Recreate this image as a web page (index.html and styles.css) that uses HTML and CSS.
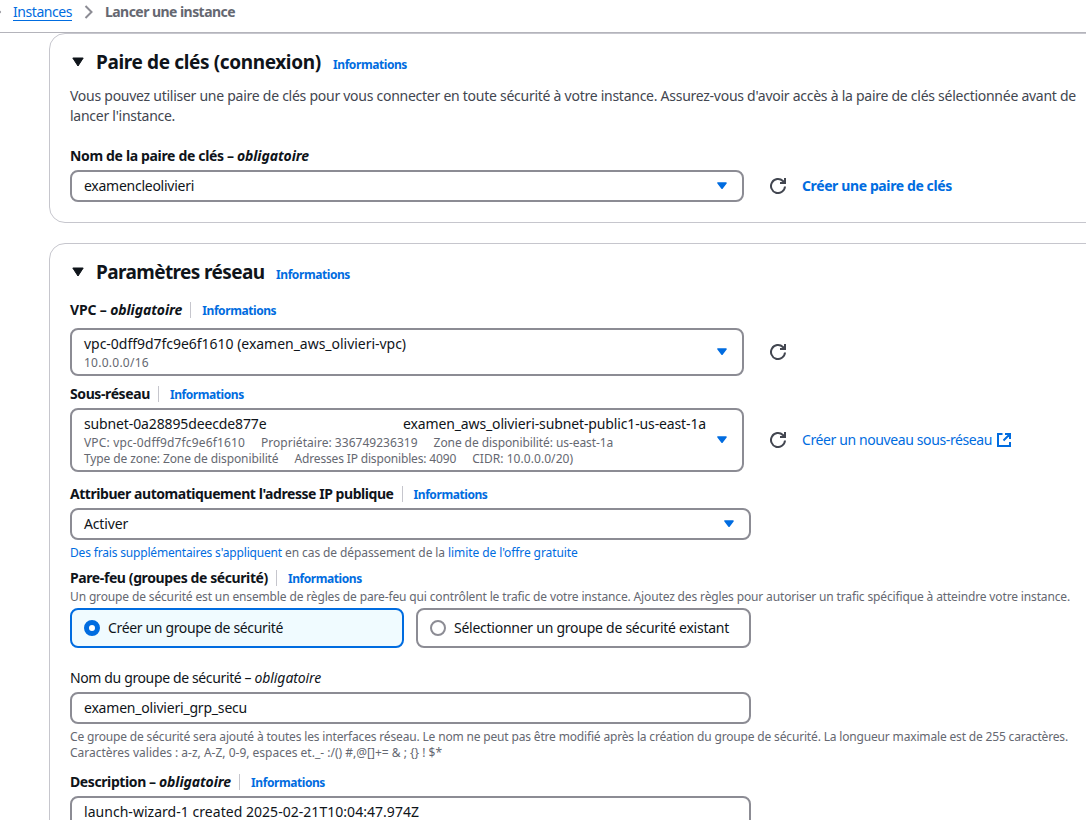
FILE: index.html
```html
<!DOCTYPE html>
<html lang="fr">
<head>
<meta charset="utf-8">
<title>Lancer une instance</title>
<link rel="stylesheet" href="styles.css">
</head>
<body>
<svg class="defs" width="0" height="0" aria-hidden="true">
  <symbol id="caret" viewBox="0 0 16 16"><path d="M4 5h8l-4 5.2z" fill="currentColor" stroke="currentColor" stroke-width="1.6" stroke-linejoin="round"/></symbol>
  <symbol id="refresh" viewBox="0 0 16 16"><path d="M15 8.5A7 7 0 1 1 12.9 3L15 5" fill="none" stroke="currentColor" stroke-width="2"/><path d="M10 5h5V0" fill="none" stroke="currentColor" stroke-width="2"/><path d="M12 4.5L14.500 2V5z" fill="currentColor"/></symbol>
  <symbol id="external" viewBox="0 0 16 16"><path d="M6.500 2H2v12h12V10M9 2h5v5M14 2L7.500 8.500" fill="none" stroke="currentColor" stroke-width="2"/></symbol>
</svg>

<nav class="breadcrumb">
  <svg class="crumb-edge" width="3" height="14" viewBox="0 0 3 14"><path d="M0 5.500L1.200 7L0 8.500" fill="#8c8c94"/></svg>
  <a class="crumb-link" href="#">Instances</a>
  <svg class="chevron" width="10" height="14" viewBox="0 0 10 14"><path d="M1.500 1l6 6-6 6" fill="none" stroke="#8c8c94" stroke-width="2"/></svg>
  <span class="crumb-current">Lancer une instance</span>
</nav>

<main class="content">
  <section class="card">
    <header class="card-head">
      <svg class="toggle" viewBox="0 0 16 16"><path d="M2.800 4h10.400L8 12z" fill="currentColor" stroke="currentColor" stroke-linejoin="round"/></svg>
      <h2 class="title-key">Paire de clés (connexion)</h2>
      <a class="info" href="#">Informations</a>
    </header>
    <p class="intro">Vous pouvez utiliser une paire de clés pour vous connecter en toute sécurité à votre instance. Assurez-vous d'avoir accès à la paire de clés sélectionnée avant de<br>lancer l'instance.</p>
    <div class="label label-key"><b>Nom de la paire de clés – <i>obligatoire</i></b></div>
    <div class="field-row">
      <div class="select with-action"><span class="value v-key">examencleolivieri</span><svg class="caret"><use href="#caret"/></svg></div>
      <svg class="refresh"><use href="#refresh"/></svg>
      <a class="action strong" href="#">Créer une paire de clés</a>
    </div>
  </section>

  <section class="card">
    <header class="card-head">
      <svg class="toggle" viewBox="0 0 16 16"><path d="M2.800 4h10.400L8 12z" fill="currentColor" stroke="currentColor" stroke-linejoin="round"/></svg>
      <h2 class="title-net">Paramètres réseau</h2>
      <a class="info" href="#">Informations</a>
    </header>

    <div class="label label-vpc"><b class="l-vpc">VPC – <i>obligatoire</i></b><a class="info split" href="#"><span>Informations</span></a></div>
    <div class="field-row">
      <div class="select with-action two-line">
        <div class="stack"><span class="value v-vpc">vpc-0dff9d7fc9e6f1610 (examen_aws_olivieri-vpc)</span><span class="tag g-cidr">10.0.0.0/16</span></div>
        <svg class="caret"><use href="#caret"/></svg>
      </div>
      <svg class="refresh"><use href="#refresh"/></svg>
    </div>

    <div class="label label-subnet"><b>Sous-réseau</b><a class="info split" href="#"><span>Informations</span></a></div>
    <div class="field-row">
      <div class="select with-action three-line">
        <div class="stack">
          <div class="value-pair"><span class="value v-subnet">subnet-0a28895deecde877e</span><span class="value v-subnet">examen_aws_olivieri-subnet-public1-us-east-1a</span></div>
          <div class="tags"><span class="tag g-vpc">VPC: vpc-0dff9d7fc9e6f1610</span><span class="tag g-owner">Propriétaire: 336749236319</span><span class="tag g-zone">Zone de disponibilité: us-east-1a</span></div>
          <div class="tags"><span class="tag g-type">Type de zone: Zone de disponibilité</span><span class="tag g-ips">Adresses IP disponibles: 4090</span><span class="tag g-range">CIDR: 10.0.0.0/20)</span></div>
        </div>
        <svg class="caret"><use href="#caret"/></svg>
      </div>
      <svg class="refresh"><use href="#refresh"/></svg>
      <a class="action" href="#">Créer un nouveau sous-réseau</a>
      <svg class="external"><use href="#external"/></svg>
    </div>

    <div class="label label-ip"><b>Attribuer automatiquement l'adresse IP publique</b><a class="info split" href="#"><span>Informations</span></a></div>
    <div class="select"><span class="value v-on">Activer</span><svg class="caret"><use href="#caret"/></svg></div>
    <p class="hint hint-cost"><a class="cost-link" href="#">Des frais supplémentaires s'appliquent</a> en cas de dépassement de la <a class="limit-link" href="#">limite de l'offre gratuite</a></p>

    <div class="label label-firewall"><b>Pare-feu (groupes de sécurité)</b><a class="info split" href="#"><span>Informations</span></a></div>
    <p class="hint hint-firewall">Un groupe de sécurité est un ensemble de règles de pare-feu qui contrôlent le trafic de votre instance. Ajoutez des règles pour autoriser un trafic spécifique à atteindre votre instance.</p>
    <div class="tiles">
      <div class="tile selected"><span class="radio"></span><span class="v-create">Créer un groupe de sécurité</span></div>
      <div class="tile"><span class="radio"></span><span class="v-pick">Sélectionner un groupe de sécurité existant</span></div>
    </div>

    <div class="label label-group"><span>Nom du groupe de sécurité – <i>obligatoire</i></span></div>
    <div class="select"><span class="value v-group">examen_olivieri_grp_secu</span></div>
    <p class="hint hint-group">Ce groupe de sécurité sera ajouté à toutes les interfaces réseau. Le nom ne peut pas être modifié après la création du groupe de sécurité. La longueur maximale est de 255 caractères.<br><span class="charset">Caractères valides : a-z, A-Z, 0-9, espaces et._- :/() #,@[]+= &amp; ; {} ! $*</span></p>

    <div class="label label-desc"><b>Description – <i>obligatoire</i></b><a class="info split" href="#"><span>Informations</span></a></div>
    <div class="select"><span class="value v-desc">launch-wizard-1 created 2025-02-21T10:04:47.974Z</span></div>
  </section>
</main>
</body>
</html>
```
FILE: styles.css
```css
* { box-sizing: border-box; }
html { overflow: hidden; }
body {
  margin: 0;
  height: 820px;
  overflow: hidden;
  background: #fff;
  color: #0f141a;
  font: 14px/20px "Noto Sans", sans-serif;
}
h2, p { margin: 0; }
a { color: #006ce0; text-decoration: none; }
svg { display: block; flex: none; }
.defs { position: absolute; }

.breadcrumb {
  display: flex;
  align-items: center;
  height: 33px;
  padding-bottom: 8px;
  border-bottom: 1px solid #b4b4bb;
  white-space: nowrap;
}
.crumb-edge { margin-right: 10px; }
.crumb-link {
  width: 59px;
  letter-spacing: -0.44px;
  line-height: 17px;
  border-bottom: 1px solid #006ce0;
}
.chevron { margin: 0 11px 0 12px; }
.crumb-current { color: #656871; font-weight: 700; letter-spacing: -0.55px; }

.content { display: flex; flex-direction: column; gap: 20px; padding-left: 49px; width: 1140px; }
.card {
  border: 1px solid #c6c6cd;
  border-radius: 16px;
  padding: 16px 20px 20px;
  white-space: nowrap;
}
.card-head { display: flex; align-items: center; height: 24px; }
.toggle { width: 16px; height: 16px; margin-right: 10px; }
h2 { font-size: 19px; line-height: 24px; font-weight: 700; margin-right: 11px; }
.title-key { width: 226px; letter-spacing: -0.37px; }
.title-net { width: 169px; letter-spacing: -0.61px; }
.info { font-size: 12px; line-height: 20px; font-weight: 700; letter-spacing: -0.42px; }
.card-head .info { padding-top: 6px; }

.intro { margin-top: 12px; color: #424650; letter-spacing: -0.262px; }

.label { display: flex; align-items: center; height: 20px; margin-bottom: 4px; letter-spacing: -0.4px; }
.label i { letter-spacing: -0.09px; }
.label .split { display: flex; align-items: center; height: 16px; margin-left: 8px; padding-left: 11px; border-left: 1px solid #c6c6cd; }
.split span { padding-top: 2px; }
.label-key { margin-top: 20px; letter-spacing: -0.34px; }
.label-vpc { margin-top: 16px; margin-bottom: 8px; }
.l-vpc { letter-spacing: -0.15px; }
.label-subnet { margin-top: 8px; }
.label-ip { margin-top: 12px; letter-spacing: -0.445px; }
.label-firewall { margin-top: 7px; margin-bottom: 1px; }
.label-group { margin-top: 20px; letter-spacing: -0.37px; }
.label-desc { margin-top: 11px; }

.field-row { display: flex; align-items: center; }
.select {
  display: flex;
  align-items: center;
  justify-content: space-between;
  width: 681px;
  height: 32px;
  padding: 0 12px;
  border: 2px solid #8c8c94;
  border-radius: 8px;
}
.with-action { width: 674px; }
.two-line { height: 48px; }
.three-line { height: 64px; }
.stack { display: flex; flex-direction: column; }
.value-pair { display: flex; justify-content: space-between; width: 622px; }
.tags { display: flex; gap: 16px; height: 16px; }
.tag { height: 16px; font-size: 12px; line-height: 18px; color: #656871; }
.caret { width: 16px; height: 16px; color: #006ce0; }
.refresh { width: 16px; height: 16px; margin: 0 16px 0 26px; color: #424650; }
.action { letter-spacing: -0.39px; }
.strong { font-weight: 700; }
.external { width: 16px; height: 16px; margin-left: 4px; color: #006ce0; }

.hint { font-size: 12px; line-height: 16px; color: #656871; }
.hint-cost { margin-top: 5px; letter-spacing: -0.09px; }
.cost-link { letter-spacing: -0.174px; }
.limit-link { letter-spacing: -0.09px; }
.hint-firewall { letter-spacing: -0.142px; }
.hint-group { margin-top: 5px; letter-spacing: -0.166px; }
.charset { letter-spacing: 0; }

.tiles { display: grid; grid-template-columns: 334px 335px; gap: 12px; margin-top: 3px; }
.tile { display: flex; align-items: center; gap: 8px; height: 40px; padding-left: 12px; border: 2px solid #8c8c94; border-radius: 8px; }
.tile.selected { border-color: #006ce0; background: #f0fbff; }
.radio { width: 16px; height: 16px; border: 2px solid #8c8c94; border-radius: 50%; }
.selected .radio { border: 5px solid #006ce0; background: #fff; }

.v-key { letter-spacing: -0.26px; }
.v-vpc { letter-spacing: -0.028px; }
.v-subnet { letter-spacing: -0.13px; }
.v-on { letter-spacing: -0.16px; }
.v-create { letter-spacing: -0.346px; }
.v-pick { letter-spacing: -0.255px; }
.v-group { letter-spacing: -0.2px; }
.v-desc { letter-spacing: 0.035px; }
.g-cidr { letter-spacing: 0.25px; }
.g-vpc { letter-spacing: 0.152px; }
.g-owner { letter-spacing: 0.03px; }
.g-zone { letter-spacing: -0.08px; }
.g-type { letter-spacing: -0.11px; }
.g-ips { letter-spacing: -0.16px; }
.g-range { letter-spacing: 0.057px; }
```
